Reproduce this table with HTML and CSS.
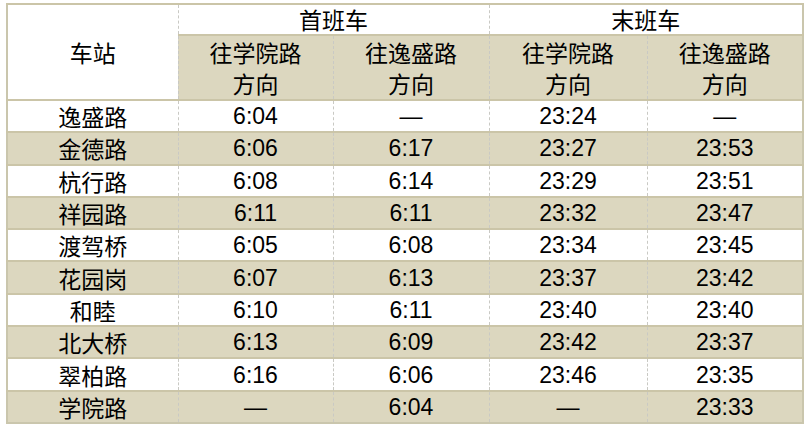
FILE: index.html
```html
<!DOCTYPE html>
<html lang="zh">
<head>
<meta charset="utf-8">
<link rel="stylesheet" href="styles.css">
</head>
<body>
<div class="wrap">
<table class="tt">
  <colgroup>
    <col class="c1"><col class="c2"><col class="c3"><col class="c4"><col class="c5">
  </colgroup>
  <thead>
    <tr class="h1">
      <th rowspan="2" class="station-h">车站</th>
      <th colspan="2" class="grp">首班车</th>
      <th colspan="2" class="grp">末班车</th>
    </tr>
    <tr class="h2">
      <th class="dir">往学院路<br>方向</th>
      <th class="dir">往逸盛路<br>方向</th>
      <th class="dir">往学院路<br>方向</th>
      <th class="dir">往逸盛路<br>方向</th>
    </tr>
  </thead>
  <tbody>
    <tr class="w"><td class="st">逸盛路</td><td>6:04</td><td>—</td><td>23:24</td><td>—</td></tr>
    <tr class="b"><td class="st">金德路</td><td>6:06</td><td>6:17</td><td>23:27</td><td>23:53</td></tr>
    <tr class="w"><td class="st">杭行路</td><td>6:08</td><td>6:14</td><td>23:29</td><td>23:51</td></tr>
    <tr class="b"><td class="st">祥园路</td><td>6:11</td><td>6:11</td><td>23:32</td><td>23:47</td></tr>
    <tr class="w"><td class="st">渡驾桥</td><td>6:05</td><td>6:08</td><td>23:34</td><td>23:45</td></tr>
    <tr class="b"><td class="st">花园岗</td><td>6:07</td><td>6:13</td><td>23:37</td><td>23:42</td></tr>
    <tr class="w"><td class="st">和睦</td><td>6:10</td><td>6:11</td><td>23:40</td><td>23:40</td></tr>
    <tr class="b"><td class="st">北大桥</td><td>6:13</td><td>6:09</td><td>23:42</td><td>23:37</td></tr>
    <tr class="w"><td class="st">翠柏路</td><td>6:16</td><td>6:06</td><td>23:46</td><td>23:35</td></tr>
    <tr class="b"><td class="st">学院路</td><td>—</td><td>6:04</td><td>—</td><td>23:33</td></tr>
  </tbody>
</table>
</div>
</body>
</html>
```
FILE: styles.css
```css
html, body {
  margin: 0;
  padding: 0;
  background: #ffffff;
}
.wrap {
  padding: 3px 0 0 6px;
}
.tt {
  border-collapse: collapse;
  width: 796px;
  table-layout: fixed;
  border: 2px solid #cac6ad;
  font-family: "Liberation Sans", "Noto Sans CJK SC", sans-serif;
  font-size: 23px;
  color: #000000;
}
.c1 { width: 171px; }
.c2 { width: 155px; }
.c3 { width: 156px; }
.c4 { width: 158px; }
.c5 { width: 156px; }
.tt th, .tt td {
  padding: 0;
  text-align: center;
  font-weight: normal;
  border-left: 1px dashed #c9c9c4;
  border-top: 2px solid #cbc5a8;
}
.tt th:first-child, .tt td:first-child { border-left: none; }
.tt .h2 th:first-child { border-left: 1px dashed #c9c9c4; }
.h1 th {
  height: 29px;
  line-height: 29px;
  background: #ffffff;
  font-family: "Noto Sans CJK SC", sans-serif;
}
.h1 .station-h { background: #ffffff; }
.h2 th {
  height: 63px;
  line-height: 31px;
  background: #dcd7bf;
  font-family: "Noto Sans CJK SC", sans-serif;
}
.tt td {
  height: 30.3px;
  line-height: 30px;
}
.tt td.st {
  font-family: "Noto Sans CJK SC", sans-serif;
}
.w td { background: #ffffff; }
.b td { background: #dcd7bf; }
```
